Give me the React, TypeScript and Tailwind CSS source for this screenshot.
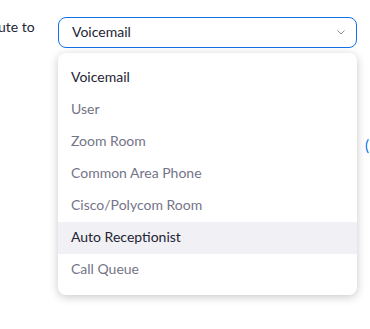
const options = [
  'Voicemail',
  'User',
  'Zoom Room',
  'Common Area Phone',
  'Cisco/Polycom Room',
  'Auto Receptionist',
  'Call Queue',
]

export default function App() {
  const selected = 'Voicemail'
  const hovered = 'Auto Receptionist'

  return (
    <div className="relative h-[329px] w-[370px] overflow-hidden bg-white font-['Lato','Open_Sans',sans-serif] text-[14px]">
      <div className="flex items-start pt-[17px]">
        <div className="-ml-[2px] -mt-[1px] w-[60px] text-[#232333]">ute to</div>
        <div className="w-[299px]">
          <div className="flex h-[31px] items-center justify-between rounded-[8px] border border-[#0e71eb] pb-[2px] pl-[13px] pr-[11px] text-[#232333]">
            <span>{selected}</span>
            <svg width="8" height="5" viewBox="0 0 8 5" fill="none" className="mt-[2px]">
              <path d="M0.5 0.5l3.5 3.5 3.5-3.5" stroke="#8a8a99" strokeWidth="1" />
            </svg>
          </div>
        </div>
      </div>

      <span className="absolute left-[365px] top-[134px] text-[15px] text-[#0e71eb]">(</span>

      <div className="absolute left-[58px] top-[53px] w-[299px] rounded-[8px] bg-white py-[9px] shadow-[0_2px_10px_rgba(0,0,0,0.22)]">
        {options.map((o) => (
          <div
            key={o}
            className={`flex h-[32px] items-center pb-[4px] pl-[13px] ${o === hovered ? 'bg-[#f1f1f5]' : ''} ${
              o === selected || o === hovered ? 'text-[#232333]' : 'text-[#747487]'
            }`}
          >
            {o}
          </div>
        ))}
      </div>
    </div>
  )
}
